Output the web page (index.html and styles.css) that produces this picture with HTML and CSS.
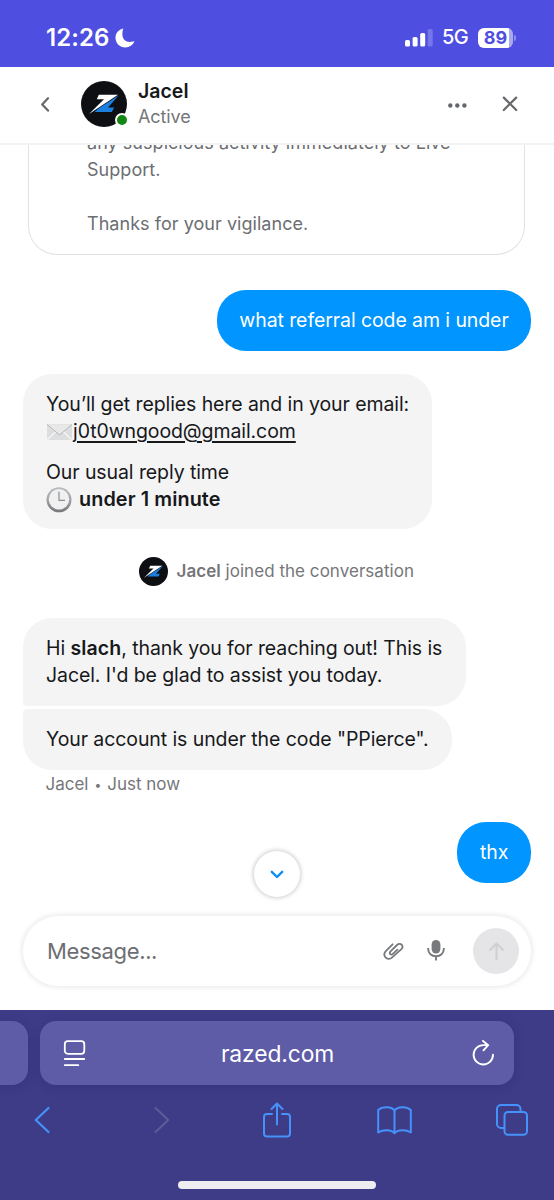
FILE: index.html
```html
<!DOCTYPE html>
<html lang="en">
<head>
    <meta charset="UTF-8">
    <meta name="viewport" content="width=device-width, initial-scale=1.0">
    <title>Jacel - Live Support</title>
    <link rel="stylesheet" href="styles.css">
</head>
<body>
    <svg class="defs" width="0" height="0" aria-hidden="true">
        <symbol id="logo" viewBox="0 0 46 46">
            <circle cx="23" cy="23" r="23" fill="#0d0f13"/>
            <path d="M17.800 13.700H37L8 33L23 18.300H15.800Z" fill="#fff"/>
            <path d="M37.800 14.200L27 26.500H33.200L30.800 31H13.500L18.500 26.800Z" fill="#1b7fe0"/>
        </symbol>
    </svg>

    <div class="status-bar">
        <span class="clock">12:26</span>
        <svg class="moon" width="20" height="20" viewBox="0 0 20 20"><path d="M8.300.6C3.600 1.600.5 5.200.5 9.700c0 5.500 4.200 9.700 9.900 9.700 4.200 0 7.700-2.300 9-6.300-1.600.7-2.900.9-4.400.9-4.600 0-7.600-3-7.600-7.500 0-2.300.3-4.100.9-5.900z" fill="#fff"/></svg>
        <svg class="signal" width="28" height="18" viewBox="0 0 28 18">
            <rect x="0" y="11" width="5" height="6.500" rx="1.600" fill="#fff"/>
            <rect x="7.600" y="8" width="5" height="9.500" rx="1.600" fill="#fff"/>
            <rect x="15.200" y="4" width="5" height="13.500" rx="1.600" fill="#fff"/>
            <rect x="22.700" y="0" width="5" height="17.500" rx="1.600" fill="#7775ea"/>
        </svg>
        <span class="network">5G</span>
        <span class="battery">89</span>
        <span class="battery-tip"></span>
    </div>

    <div class="chat-header">
        <svg class="back" width="10" height="16" viewBox="0 0 10 16"><path d="M8 2.200L2.200 8.400 8 14.600" fill="none" stroke="#65686b" stroke-width="2.200" stroke-linecap="round" stroke-linejoin="round"/></svg>
        <div class="avatar">
            <svg width="46" height="46"><use href="#logo"/></svg>
            <span class="online"></span>
        </div>
        <div class="agent">
            <div class="agent-name">Jacel</div>
            <div class="agent-status">Active</div>
        </div>
        <svg class="more" width="20" height="7" viewBox="0 0 20 7" fill="#65686b"><circle cx="3.300" cy="4.500" r="2.200"/><circle cx="10.300" cy="4.500" r="2.200"/><circle cx="17.400" cy="4.500" r="2.200"/></svg>
        <svg class="close" width="16" height="16" viewBox="0 0 16 16"><path d="M1.800 1.600l12.400 12.400M14.200 1.600L1.800 14" stroke="#65686b" stroke-width="2.200" stroke-linecap="round"/></svg>
    </div>

    <div class="chat">
        <div class="notice">
            <p>any suspicious activity immediately to Live Support.</p>
            <p>Thanks for your vigilance.</p>
        </div>

        <div class="bubble user first-user">what referral code am i under</div>

        <div class="bubble reply-info">
            <p class="replies">You’ll get replies here and in your email:</p>
            <p class="email"><svg width="27" height="18" viewBox="0 0 27 18">
                <rect x="1" y="1" width="25" height="16" rx=".8" fill="#dddedf"/>
                <path d="M1.500 16.500L10 8.500M25.500 16.500L17 8.500" stroke="#f7f7f7" stroke-width="1.200"/>
                <path d="M1 1.400L12.300 11q1.200 1 2.400 0L26 1.400" fill="#e8e8e8" stroke="#aaa" stroke-width=".8"/>
            </svg><a>j0t0wngood@gmail.com</a></p>
            <p class="reply-time">Our usual reply time</p>
            <p class="minute"><svg width="26" height="26" viewBox="0 0 26 26">
                <defs><linearGradient id="rim" x2="0" y2="1"><stop stop-color="#b9bcc0"/><stop offset=".5" stop-color="#a0a2a5"/><stop offset="1" stop-color="#75777a"/></linearGradient></defs>
                <circle cx="13" cy="12.800" r="12.500" fill="url(#rim)"/>
                <circle cx="13" cy="12.300" r="10.300" fill="#f0f0f1"/>
                <path d="M13 4.800v8.500h6" fill="none" stroke="#8b8e91" stroke-width="1.200"/>
            </svg><strong>under 1 minute</strong></p>
        </div>

        <div class="joined">
            <svg width="29" height="29"><use href="#logo"/></svg>
            <span><strong>Jacel</strong> joined the conversation</span>
        </div>

        <div class="bubble group-top">
            <p>Hi <strong>slach</strong>, thank you for reaching out! This is</p>
            <p class="assist">Jacel. I'd be glad to assist you today.</p>
        </div>
        <div class="bubble group-bottom">Your account is under the code "PPierce".</div>
        <div class="meta">Jacel <span class="dot">•</span> Just now</div>

        <div class="bubble user thx">thx</div>

        <div class="scroll-down">
            <svg width="14" height="9" viewBox="0 0 14 9"><path d="M1.800 1.800L7 7l5.200-5.200" fill="none" stroke="#0a90f5" stroke-width="2.400" stroke-linecap="round" stroke-linejoin="round"/></svg>
        </div>
    </div>

    <div class="composer">
        <span class="placeholder">Message...</span>
        <svg class="clip" width="21" height="19" viewBox="0 0 21 19"><path d="M9.600 2.300L3 8.800c-2 2-2 4.700-.5 6.500 1.700 1.900 4.500 2 6.400.3l9.200-8.200c1.700-1.600 1.800-3.200.7-4.500-1.200-1.400-3.200-1.400-4.800.1L7.500 9.300c-.9.900-1 2-.3 2.700.7.800 1.700.7 2.600-.1l4.600-4.200" fill="none" stroke="#77797c" stroke-width="1.800" stroke-linecap="round" stroke-linejoin="round"/></svg>
        <svg class="mic" width="18" height="21" viewBox="0 0 18 21"><rect x="4.600" y="0" width="8.800" height="13.500" rx="4.400" fill="#77797c"/><path d="M1.200 8v1c0 4.300 3.300 7.300 7.800 7.300s7.800-3 7.800-7.300V8M9 16.500V20.500" fill="none" stroke="#77797c" stroke-width="1.900"/></svg>
        <div class="send">
            <svg width="17" height="19" viewBox="0 0 17 19"><path d="M8.500 18V2M1.500 8.500l7-7 7 7" fill="none" stroke="#cfd0d3" stroke-width="2.100" stroke-linejoin="round"/></svg>
        </div>
    </div>

    <div class="browser">
        <div class="tabs">
            <div class="tab-prev"></div>
            <div class="address">
                <svg width="23" height="27" viewBox="0 0 23 27" fill="none" stroke="#fff" stroke-width="1.800" stroke-linecap="round"><rect x="1.800" y="1.200" width="19.500" height="12.600" rx="3"/><path d="M1.800 19h19.500M1.800 25.200h13.500"/></svg>
                <span class="domain">razed.com</span>
                <svg width="23" height="27" viewBox="0 0 23 27" fill="none" stroke="#fff" stroke-width="1.900" stroke-linecap="round" stroke-linejoin="round"><path d="M21 14.800A9.700 9.700 0 1 1 11.300 5.100H16M11 .9l5.200 4.300-4.700 5.100"/></svg>
            </div>
        </div>
        <div class="toolbar">
            <svg width="16" height="28" viewBox="0 0 16 28" fill="none" stroke="#4592fb" stroke-width="2.200" stroke-linecap="round" stroke-linejoin="round"><path d="M14.500 2L1.800 14l12.700 12"/></svg>
            <svg class="forward" width="16" height="28" viewBox="0 0 16 28" fill="none" stroke="#5c5b99" stroke-width="2.200" stroke-linecap="round" stroke-linejoin="round"><path d="M1.500 2l12.700 12L1.500 26"/></svg>
            <svg class="share" width="28" height="36" viewBox="0 0 28 36" fill="none" stroke="#4592fb" stroke-width="2" stroke-linecap="round" stroke-linejoin="round"><path d="M9 12H4a3 3 0 0 0-3 3v16.500a3 3 0 0 0 3 3h20a3 3 0 0 0 3-3V15a3 3 0 0 0-3-3h-5M14 22.500V1.500M8.500 7L14 1.500 19.500 7"/></svg>
            <svg class="book" width="35" height="29" viewBox="0 0 35 29" fill="none" stroke="#4592fb" stroke-width="2" stroke-linejoin="round"><path d="M17.500 4.500C14.500.4 5.500.2 1.200 4v22.500c4.300-3 13.300-3.300 16.300.8 3-4.100 12-3.800 16.300-.8V4C29.500.2 20.500.4 17.500 4.500v22.500"/></svg>
            <svg width="32" height="32" viewBox="0 0 32 32" fill="none" stroke="#4592fb" stroke-width="2"><path d="M8.500 24H5a4 4 0 0 1-4-4V5a4 4 0 0 1 4-4h15.500a4 4 0 0 1 4 4v3"/><rect x="8.500" y="8" width="22.500" height="22.800" rx="3.500"/></svg>
        </div>
        <div class="home-indicator"></div>
    </div>
</body>
</html>
```

FILE: styles.css
```css
* {
    box-sizing: border-box;
}
body {
    margin: 0;
    width: 554px;
    height: 1200px;
    overflow: hidden;
    display: flex;
    flex-direction: column;
    background: #fff;
    color: #17181a;
    font-family: Inter, "Liberation Sans", sans-serif;
    font-size: 19.5px;
    line-height: 27px;
}
p {
    margin: 0;
    white-space: nowrap;
}
svg {
    display: block;
    flex-shrink: 0;
}
strong {
    font-weight: 600;
}
.defs {
    position: absolute;
}

/* Status bar */
.status-bar {
    height: 67px;
    flex-shrink: 0;
    display: flex;
    align-items: center;
    padding: 8px 38px 0 46px;
    background: #4e4ee1;
    color: #fff;
}
.clock {
    width: 69px;
    font-size: 24px;
    font-weight: 600;
    letter-spacing: 0.1px;
}
.signal {
    margin-left: auto;
}
.network {
    margin-left: 9px;
    width: 36px;
    font-size: 20px;
    font-weight: 500;
    letter-spacing: -0.5px;
}
.battery {
    width: 35px;
    height: 20px;
    border-radius: 6px;
    background: linear-gradient(to right, #fff 31px, #aaa9f0 31px);
    color: #4e4ee1;
    font-size: 18px;
    font-weight: 700;
    line-height: 20px;
    text-align: center;
}
.battery-tip {
    width: 2px;
    height: 6px;
    margin-left: 1px;
    border-radius: 0 2px 2px 0;
    background: #8f8eec;
}

/* Header */
.chat-header {
    height: 78px;
    flex-shrink: 0;
    display: flex;
    align-items: center;
    padding: 0 36px 2px 40px;
    border-bottom: 2px solid #f3f3f4;
}
.avatar {
    position: relative;
    margin-left: 31px;
}
.online {
    position: absolute;
    right: -2px;
    bottom: 0;
    width: 14px;
    height: 14px;
    border: 2.5px solid #fff;
    border-radius: 50%;
    background: #138713;
}
.agent {
    margin: 0 auto 0 11px;
    line-height: 25px;
}
.agent-name {
    font-weight: 600;
}
.agent-status {
    color: #757679;
    font-size: 18px;
    letter-spacing: -0.1px;
}
.close {
    margin-left: 35px;
}

/* Conversation */
.chat {
    position: relative;
    height: 770px;
    flex-shrink: 0;
    display: flex;
    flex-direction: column;
    align-items: flex-start;
    overflow: hidden;
    padding: 0 23px;
}
.notice {
    width: 497px;
    margin: -16px 0 0 5px;
    padding: 0 57px 17px 58px;
    border: 1.5px solid #e2e2e4;
    border-width: 0 1.5px 1.5px;
    border-radius: 0 0 29px 29px;
    color: #6c6e72;
    font-size: 18px;
    letter-spacing: 0.04px;
}
.notice p {
    white-space: normal;
}
.notice p + p {
    margin-top: 27px;
}
.bubble {
    padding: 17px 23px;
    border-radius: 29px;
    background: #f4f4f5;
    letter-spacing: -0.09px;
    white-space: nowrap;
}
.bubble strong {
    letter-spacing: 0.1px;
}
.user {
    align-self: flex-end;
    background: #0095ff;
    color: #fff;
    text-align: center;
}
.first-user {
    width: 314px;
    margin-top: 35px;
    padding-left: 22px;
    padding-right: 22px;
}
.reply-info {
    width: 409px;
    height: 155px;
    margin-top: 23px;
}
.email,
.minute {
    display: flex;
    align-items: center;
}
.email a {
    text-decoration: underline;
    text-decoration-thickness: 1.5px;
    text-underline-offset: 2.5px;
}
.reply-time {
    margin-top: 14px;
}
.minute svg {
    margin-right: 7px;
}
.minute strong {
    font-size: 19.8px;
}
.joined {
    display: flex;
    align-items: center;
    gap: 8.5px;
    height: 29px;
    margin: 28px 0 0 116px;
    color: #757679;
    font-size: 17px;
    letter-spacing: 0.04px;
    white-space: nowrap;
}
.group-top {
    width: 443px;
    height: 88px;
    margin-top: 32px;
    border-bottom-left-radius: 4px;
}
.group-bottom {
    width: 429px;
    height: 61px;
    margin-top: 3px;
    border-top-left-radius: 4px;
}
.meta {
    display: flex;
    align-items: center;
    gap: 6px;
    margin: 1px 0 0 22.5px;
    color: #757679;
    font-size: 17px;
}
.dot {
    font-size: 12px;
}
.thx {
    width: 74px;
    margin-top: 24px;
}
.scroll-down {
    position: absolute;
    left: 254px;
    top: 706px;
    width: 46px;
    height: 46px;
    display: flex;
    align-items: center;
    justify-content: center;
    border-radius: 50%;
    background: #fff;
    box-shadow: 0 0 4px 1px rgba(0, 0, 0, 0.2);
}

/* Composer */
.composer {
    width: 508px;
    height: 70px;
    flex-shrink: 0;
    display: flex;
    align-items: center;
    margin: 1px 23px 24px;
    padding: 0 12px 0 24px;
    border-radius: 35px;
    background: #fff;
    box-shadow: 0 0 4px 2px rgba(20, 20, 40, 0.08);
}
.placeholder {
    margin-right: auto;
    color: #6c6e72;
    font-size: 22px;
    letter-spacing: -0.35px;
}
.mic {
    margin-left: 23px;
    margin-bottom: 2px;
}
.send {
    width: 46px;
    height: 46px;
    margin-left: 28px;
    display: flex;
    align-items: center;
    justify-content: center;
    border-radius: 50%;
    background: #e5e5e7;
}

/* Browser controls */
.browser {
    height: 190px;
    flex-shrink: 0;
    display: flex;
    flex-direction: column;
    padding-top: 11px;
    background: #3e3c86;
}
.tabs {
    display: flex;
    gap: 12px;
    height: 64px;
}
.tab-prev {
    width: 28px;
    border-radius: 0 16px 16px 0;
    background: #5e5ca7;
    box-shadow: 0 2px 12px rgba(30, 25, 90, 0.2);
}
.address {
    width: 474px;
    display: flex;
    align-items: center;
    justify-content: space-between;
    padding: 0 19px 0 23px;
    border-radius: 16px;
    background: #5e5ca7;
    box-shadow: 0 2px 12px rgba(30, 25, 90, 0.2);
}
.domain {
    margin-right: 3px;
    color: #fff;
    font-size: 22.8px;
    letter-spacing: -0.1px;
}
.toolbar {
    display: grid;
    grid-template-columns: repeat(5, 117.5px);
    justify-content: center;
    align-items: center;
    justify-items: center;
    width: 553px;
    height: 36px;
    margin-top: 17px;
}
.forward {
    margin-left: 5px;
}
.home-indicator {
    width: 198px;
    height: 8px;
    margin: 43px auto 0;
    border-radius: 4px;
    background: #eeeef2;
}
```
